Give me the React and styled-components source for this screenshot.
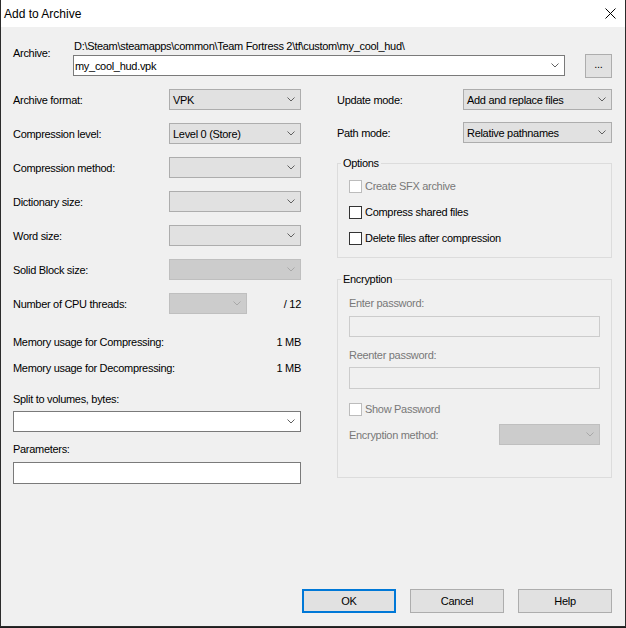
import styled, { createGlobalStyle, css } from "styled-components";

const GlobalStyle = createGlobalStyle`
  html, body {
    margin: 0;
    padding: 0;
    background: #1e1e1e;
  }
  body {
    font-family: "Liberation Sans", Arial, sans-serif;
    font-size: 11px;
    letter-spacing: -0.3px;
    color: #000;
  }
  * {
    box-sizing: border-box;
  }
`;

const Window = styled.div`
  width: 626px;
  height: 627px;
  background: #f0f0f0;
  border: 1px solid #2b2b2b;
  border-top: none;
  display: flex;
  flex-direction: column;
`;

const TitleBar = styled.div`
  height: 27px;
  background: #fff;
  display: flex;
  align-items: center;
  justify-content: space-between;
  padding: 0 9px 0 3px;
`;

const Title = styled.span`
  font-size: 12px;
  letter-spacing: 0;
`;

const Body = styled.div`
  padding: 0 13px 0 12px;
`;

const ArchiveGrid = styled.div`
  margin-top: 12px;
  display: grid;
  grid-template-columns: 40px 1fr 27px;
  grid-template-rows: 14px 21px;
  column-gap: 20px;
  row-gap: 2px;
`;

const ArchiveLabel = styled.div`
  grid-row: 1 / span 2;
  align-self: center;
  line-height: 14px;
  padding-bottom: 9px;
  white-space: nowrap;
`;

const PathText = styled.div`
  grid-column: 2 / span 2;
  line-height: 14px;
  padding-left: 1px;
  white-space: nowrap;
`;

const comboVariants = {
  normal: css`
    background: #e1e1e1;
    border-color: #adadad;
    color: #000;
  `,
  disabled: css`
    background: #cccccc;
    border-color: #bfbfbf;
    color: #a0a0a0;
  `,
  edit: css`
    background: #fff;
    border-color: #7a7a7a;
    color: #000;
  `,
};

const ComboBox = styled.div`
  height: ${(p) => p.$height || 21}px;
  margin-top: ${(p) => p.$top || 0}px;
  border: 1px solid;
  display: flex;
  align-items: center;
  justify-content: space-between;
  padding: 0 5px 0 ${(p) => (p.$variant === "edit" ? 1 : 3)}px;
  white-space: nowrap;
  ${(p) => comboVariants[p.$variant || "normal"]}
`;

const ChevronIcon = styled.svg`
  flex: none;
  color: ${(p) => (p.$disabled ? "#a8a8a8" : "#606060")};
`;

const BrowseButton = styled.div`
  align-self: center;
  height: 24px;
  background: #e1e1e1;
  border: 1px solid #adadad;
  display: flex;
  align-items: center;
  justify-content: center;
  padding-bottom: 4px;
`;

const Columns = styled.div`
  margin-top: 13px;
  display: grid;
  grid-template-columns: 288px 275px;
  column-gap: 36px;
  align-items: start;
`;

const Column = styled.div`
  display: flex;
  flex-direction: column;
`;

const FieldStack = styled.div`
  display: flex;
  flex-direction: column;
  gap: ${(p) => p.$gap}px;
`;

const FieldRow = styled.div`
  display: grid;
  grid-template-columns: ${(p) => p.$cols};
  align-items: center;
  height: 21px;
  margin-top: ${(p) => p.$top || 0}px;
  white-space: nowrap;
  color: ${(p) => (p.$disabled ? "#787878" : "#000")};
`;

const RightValue = styled.span`
  text-align: right;
`;

const InfoRow = styled.div`
  display: flex;
  justify-content: space-between;
  line-height: 14px;
  margin-top: ${(p) => p.$top}px;
`;

const Caption = styled.div`
  line-height: 14px;
  margin-top: ${(p) => p.$top}px;
  color: ${(p) => (p.$disabled ? "#787878" : "#000")};
`;

const TextBox = styled.div`
  height: ${(p) => p.$height}px;
  margin-top: ${(p) => p.$top}px;
  background: ${(p) => (p.$disabled ? "#f0f0f0" : "#fff")};
  border: 1px solid ${(p) => (p.$disabled ? "#cccccc" : "#7a7a7a")};
`;

const GroupBox = styled.fieldset`
  margin: ${(p) => p.$top}px 0 0;
  padding: 0 11px ${(p) => p.$bottom}px;
  border: 1px solid #dcdcdc;
  min-width: 0;
  display: flex;
  flex-direction: column;
`;

const Legend = styled.legend`
  margin-left: -8px;
  padding: 0 2px;
  line-height: 14px;
`;

const CheckRow = styled.label`
  display: flex;
  align-items: center;
  gap: 3px;
  height: 14px;
  margin-top: ${(p) => p.$top}px;
  color: ${(p) => (p.$disabled ? "#787878" : "#000")};
`;

const CheckBox = styled.span`
  width: 13px;
  height: 13px;
  flex: none;
  background: #fff;
  border: 1px solid ${(p) => (p.$disabled ? "#bcbcbc" : "#333333")};
`;

const Footer = styled.div`
  margin-top: auto;
  padding: 0 13px 13px 0;
  display: flex;
  justify-content: flex-end;
  gap: 14px;
`;

const Button = styled.div`
  width: 94px;
  height: 24px;
  background: #e1e1e1;
  border: ${(p) => (p.$default ? "2px solid #0078d7" : "1px solid #adadad")};
  display: flex;
  align-items: center;
  justify-content: center;
`;

function Chevron({ disabled }) {
  return (
    <ChevronIcon $disabled={disabled} width="8" height="5" viewBox="0 0 8 5">
      <polyline points="0.5,0.5 4,4 7.5,0.5" fill="none" stroke="currentColor" strokeWidth="1" />
    </ChevronIcon>
  );
}

function Combo({ value = "", variant = "normal", top, height }) {
  return (
    <ComboBox $variant={variant} $top={top} $height={height}>
      <span>{value}</span>
      <Chevron disabled={variant === "disabled"} />
    </ComboBox>
  );
}

function Check({ label, disabled, top }) {
  return (
    <CheckRow $top={top} $disabled={disabled}>
      <CheckBox $disabled={disabled} />
      {label}
    </CheckRow>
  );
}

const leftFields = [
  ["Archive format:", "VPK", "normal"],
  ["Compression level:", "Level 0 (Store)", "normal"],
  ["Compression method:", "", "normal"],
  ["Dictionary size:", "", "normal"],
  ["Word size:", "", "normal"],
  ["Solid Block size:", "", "disabled"],
];

export default function App() {
  return (
    <>
      <GlobalStyle />
      <Window>
        <TitleBar>
          <Title>Add to Archive</Title>
          <svg width="11" height="11" viewBox="0 0 11 11">
            <path d="M0.5 0.5 L10.5 10.5 M10.5 0.5 L0.5 10.5" stroke="#000" strokeWidth="1" />
          </svg>
        </TitleBar>
        <Body>
          <ArchiveGrid>
            <ArchiveLabel>Archive:</ArchiveLabel>
            <PathText>D:\Steam\steamapps\common\Team Fortress 2\tf\custom\my_cool_hud\</PathText>
            <Combo value="my_cool_hud.vpk" variant="edit" />
            <BrowseButton>...</BrowseButton>
          </ArchiveGrid>

          <Columns>
            <Column>
              <FieldStack $gap={13}>
                {leftFields.map(([label, value, variant]) => (
                  <FieldRow key={label} $cols="156px 132px">
                    <span>{label}</span>
                    <Combo value={value} variant={variant} />
                  </FieldRow>
                ))}
                <FieldRow $cols="156px 78px 1fr">
                  <span>Number of CPU threads:</span>
                  <Combo variant="disabled" />
                  <RightValue>/ 12</RightValue>
                </FieldRow>
              </FieldStack>
              <InfoRow $top={21}>
                <span>Memory usage for Compressing:</span>
                <span>1 MB</span>
              </InfoRow>
              <InfoRow $top={12}>
                <span>Memory usage for Decompressing:</span>
                <span>1 MB</span>
              </InfoRow>
              <Caption $top={17}>Split to volumes, bytes:</Caption>
              <Combo variant="edit" top={5} />
              <Caption $top={10}>Parameters:</Caption>
              <TextBox $top={6} $height={22} />
            </Column>

            <Column>
              <FieldStack $gap={12}>
                <FieldRow $cols="126px 149px">
                  <span>Update mode:</span>
                  <Combo value="Add and replace files" />
                </FieldRow>
                <FieldRow $cols="126px 149px">
                  <span>Path mode:</span>
                  <Combo value="Relative pathnames" />
                </FieldRow>
              </FieldStack>

              <GroupBox $top={13} $bottom={12}>
                <Legend>Options</Legend>
                <Check label="Create SFX archive" disabled top={9} />
                <Check label="Compress shared files" top={12} />
                <Check label="Delete files after compression" top={12} />
              </GroupBox>

              <GroupBox $top={14} $bottom={32}>
                <Legend>Encryption</Legend>
                <Caption $top={10} $disabled>Enter password:</Caption>
                <TextBox $top={6} $height={21} $disabled />
                <Caption $top={11} $disabled>Reenter password:</Caption>
                <TextBox $top={5} $height={22} $disabled />
                <Check label="Show Password" disabled top={13} />
                <FieldRow $cols="150px 101px" $top={8} $disabled>
                  <span>Encryption method:</span>
                  <Combo variant="disabled" />
                </FieldRow>
              </GroupBox>
            </Column>
          </Columns>
        </Body>
        <Footer>
          <Button $default>OK</Button>
          <Button>Cancel</Button>
          <Button>Help</Button>
        </Footer>
      </Window>
    </>
  );
}
